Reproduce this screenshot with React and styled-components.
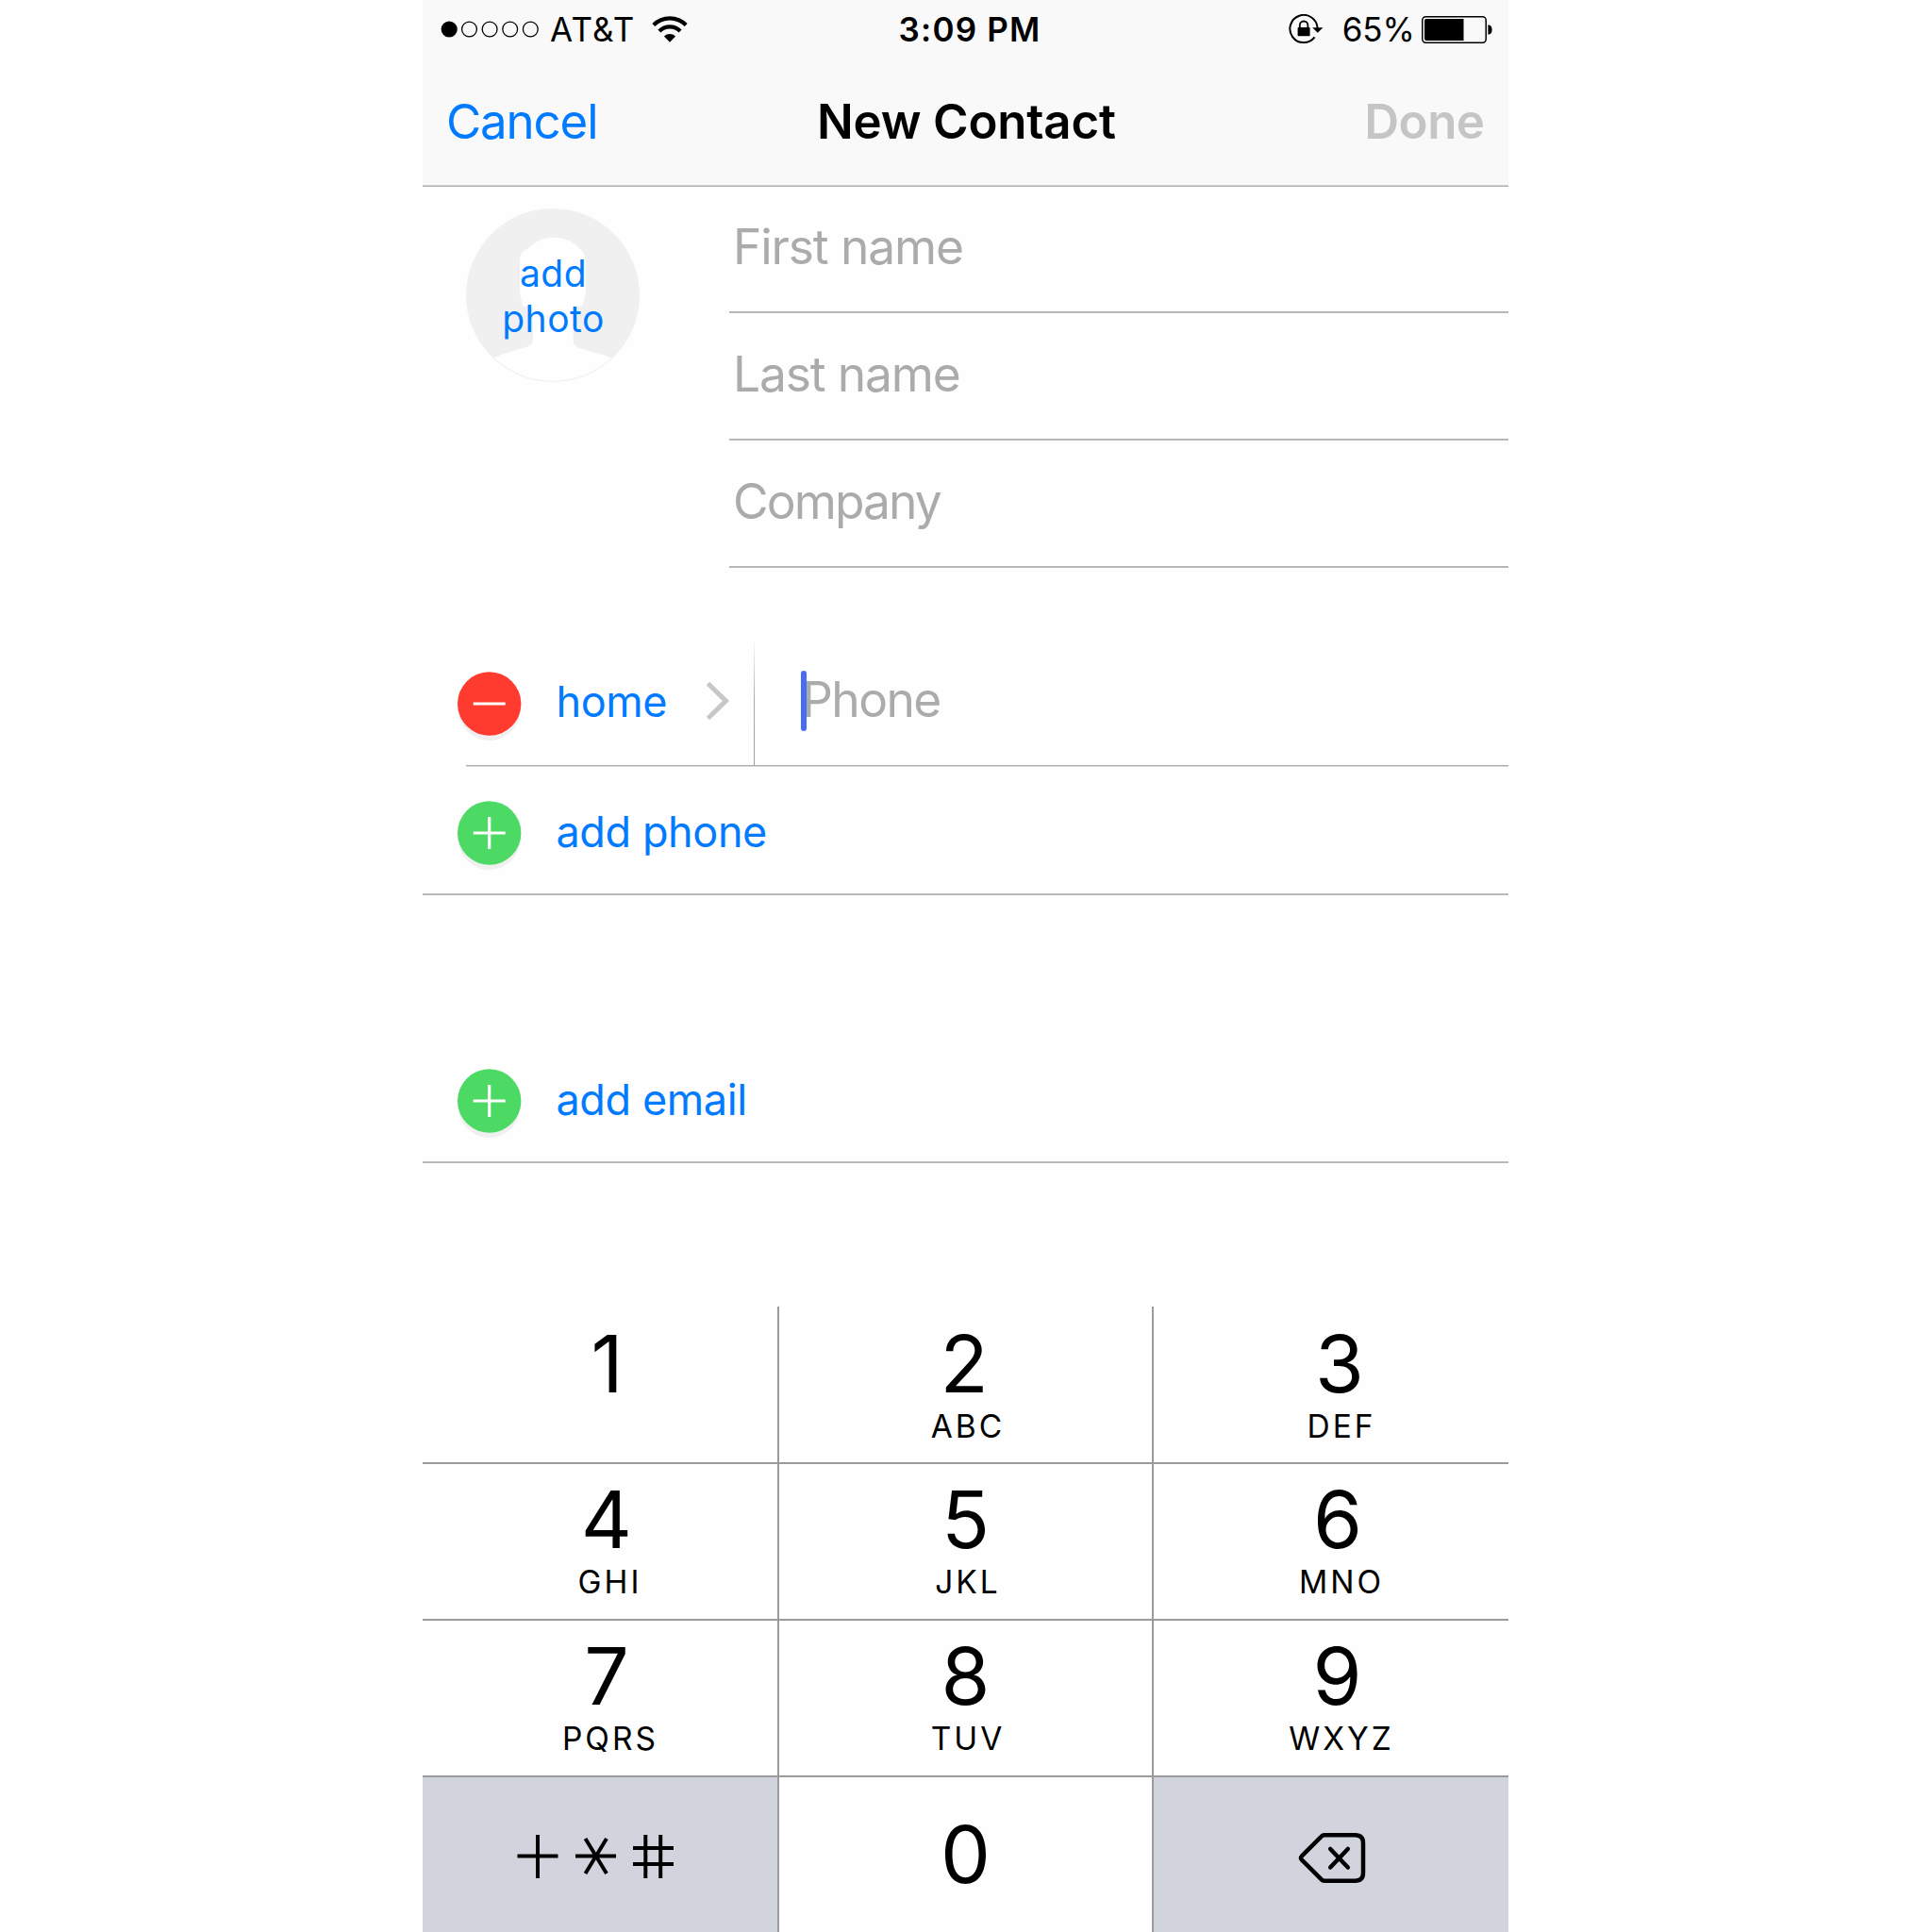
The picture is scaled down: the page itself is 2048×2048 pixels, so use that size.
import React from 'react';
import styled, { createGlobalStyle } from 'styled-components';

const GlobalStyle = createGlobalStyle`
  *, *::before, *::after { box-sizing: border-box; }
  body { margin: 0; background: #fefefe; overflow: hidden; }
`;

const BLUE = '#007aff';

const Phone = styled.main`
  width: 1151px;
  height: 2048px;
  margin-left: 448px;
  display: flex;
  flex-direction: column;
  background: #fefefe;
  color: #000;
  font-family: Inter, Roboto, 'Liberation Sans', sans-serif;
  white-space: nowrap;
`;

const Text = styled.span`
  font-size: ${(p) => p.$size}px;
  font-weight: ${(p) => p.$weight || 400};
  letter-spacing: ${(p) => p.$track || 0}px;
  margin-left: ${(p) => p.$indent || 0}px;
  margin-right: ${(p) => -(p.$track || 0)}px;
  color: ${(p) => p.$color || 'inherit'};
  line-height: 1.2;
`;

const Rule = styled.div`
  flex: none;
  height: 2px;
  margin-left: ${(p) => p.$inset || 0}px;
  background: linear-gradient(
    ${(p) => p.$top || '#bdbdbd'} 50%,
    ${(p) => p.$bottom || '#b5b5b5'} 50%
  );
`;

const Header = styled.header`
  background: #f9f9f9;
`;

const Bar = styled.div`
  display: grid;
  grid-template-columns: 1fr auto 1fr;
  align-items: center;
  height: ${(p) => p.$height}px;
  padding: ${(p) => p.$pad};
`;

const Side = styled.div`
  display: flex;
  align-items: center;
  justify-content: ${(p) => (p.$end ? 'flex-end' : 'flex-start')};
  gap: ${(p) => p.$gap || 0}px;
`;

const Icon = styled.svg`
  display: block;
  flex: none;
`;

const Identity = styled.section`
  display: grid;
  grid-template-columns: 325px 1fr;
`;

const PhotoCell = styled.div`
  padding: 23px 0 0 46px;
`;

const Photo = styled.button`
  position: relative;
  display: grid;
  place-items: center;
  width: 184px;
  height: 184px;
  padding: 0;
  border: 0;
  background: none;
  font-family: inherit;
`;

const PhotoLabel = styled.span`
  position: absolute;
  inset: 45px 0 auto 1px;
  font-size: 39px;
  line-height: 48px;
  letter-spacing: 0.5px;
  text-align: center;
  color: ${BLUE};
`;

const Field = styled.div`
  display: flex;
  align-items: center;
  height: ${(p) => p.$height}px;
  padding: 0 0 ${(p) => p.$lift}px 4px;
`;

const Row = styled.div`
  display: flex;
  align-items: center;
  height: 134px;
  margin-top: ${(p) => p.$gap || 0}px;
  padding-left: 37px;
`;

const Label = styled.div`
  display: flex;
  align-items: center;
  width: ${(p) => p.$width || 'auto'};
  margin-left: 36.5px;
  padding-top: ${(p) => p.$drop || 0}px;
`;

const RoundIcon = styled(Icon)`
  margin-top: ${(p) => p.$drop || 0}px;
`;

const Chevron = styled(Icon)`
  margin-bottom: 2px;
`;

const Divider = styled.div`
  width: 1px;
  height: 134px;
  margin-left: 24.5px;
  background: linear-gradient(to bottom, rgba(165, 165, 165, 0), #a8a8a8 50%, #a0a0a0);
`;

const PhoneInput = styled.div`
  display: flex;
  align-items: center;
  margin: 0 0 5px 49.5px;
`;

const Caret = styled.span`
  width: 6px;
  height: 64px;
  margin: 3px -5px 0 0;
  border-radius: 3px;
  background: #466df3;
  z-index: 1;
`;

const Keypad = styled.section`
  display: grid;
  grid-template-columns: 376px 395px 376px;
  grid-template-rows: 165px 164px 164px 164px;
  gap: 2px;
  margin-top: auto;
  background: #9b9b9b;
`;

const Key = styled.div`
  display: flex;
  flex-direction: column;
  align-items: center;
  justify-content: ${(p) => (p.$middle ? 'center' : 'flex-start')};
  padding-top: ${(p) => p.$top || 0}px;
  padding-left: ${(p) => p.$shift || 0}px;
  padding-right: ${(p) => p.$back || 0}px;
  background: ${(p) => (p.$dim ? '#d1d4dc' : '#fefefe')};
`;

const Digit = styled.span`
  font-size: 84px;
  line-height: 98px;
  padding-right: ${(p) => p.$nudge || 0}px;
`;

const Letters = styled.span`
  font-size: 33.5px;
  line-height: 34px;
  letter-spacing: 3px;
  margin-right: -4px;
`;

function SignalIcon() {
  return (
    <Icon width="104" height="20" viewBox="0 0 104 20">
      <circle cx="9.2" cy="10" r="8.6" />
      {[30.5, 52.1, 73.7, 95.3].map((x) => (
        <circle key={x} cx={x} cy="10" r="7.9" fill="none" stroke="#000" strokeWidth="1.3" />
      ))}
    </Icon>
  );
}

function WifiIcon() {
  return (
    <Icon width="38" height="28" viewBox="0 0 38 28">
      <g fill="none" stroke="#000" strokeWidth="4.2">
        <path d="M1.8 9.6A24.3 24.3 0 0 1 36.2 9.6" />
        <path d="M7.9 16A15.8 15.8 0 0 1 30.1 16" />
      </g>
      <path d="M12.9 21.6A8.7 8.7 0 0 1 25.1 21.6L19 27.8Z" />
    </Icon>
  );
}

function RotationLockIcon() {
  return (
    <Icon width="37" height="32" viewBox="0 0 37 32">
      <path
        d="M27.6 24.4A14.6 14.6 0 1 1 30.6 15"
        fill="none"
        stroke="#000"
        strokeWidth="2"
      />
      <path d="M25.2 14.2H36.4L30.8 19.8Z" />
      <rect x="9.6" y="14" width="13" height="9.3" rx="0.8" />
      <path
        d="M11.8 15V11.8A4.3 4.3 0 0 1 20.4 11.8V15"
        fill="none"
        stroke="#000"
        strokeWidth="1.8"
      />
    </Icon>
  );
}

function BatteryIcon() {
  return (
    <Icon width="75" height="29" viewBox="0 0 75 29">
      <rect x="0.8" y="0.8" width="67.4" height="27.4" rx="3.6" fill="none" stroke="#000" strokeWidth="1.5" />
      <path d="M5 3H44.5V26H5Q3 26 3 24V5Q3 3 5 3Z" />
      <path d="M70.4 9.3Q74.6 9.8 74.6 14.5T70.4 19.7Z" />
    </Icon>
  );
}

function Silhouette() {
  return (
    <Icon width="184" height="184" viewBox="0 0 184 184">
      <defs>
        <clipPath id="photo-disc">
          <circle cx="92" cy="92" r="90.8" />
        </clipPath>
      </defs>
      <circle cx="92" cy="92" r="92" fill="#f0f0f0" />
      <path
        clipPath="url(#photo-disc)"
        fill="#fefefe"
        d="M92.5 30.7C102 30.5 113 34 119.5 42C124.5 44.5 126.5 50 126.5 56L127 86C127 92 125 98 123.3 103.5L113.5 105V137C113.5 142.5 114.5 146 119 147.5C130 151.5 143 154 154 158.3V184H30V158.3C41 153 54 150 65 146.5C70 145 71 142 71 137V105L60.5 103.5C58.5 98 57 92 57 86V55C57 49 60 44 66.5 42C73 35 82 30.7 92.5 30.7Z"
      />
    </Icon>
  );
}

function RoundButton({ kind, drop }) {
  return (
    <RoundIcon $drop={drop} width="68" height="76" viewBox="0 -2 68 76">
      <circle cx="33.7" cy="40" r="33" fill="#f0f0f0" />
      <circle cx="33.7" cy="34" r="33.7" fill={kind === 'add' ? '#4cd964' : '#ff3b30'} />
      <path
        d={kind === 'add' ? 'M16.7 34H50.7M33.7 17V51' : 'M16.7 34H50.7'}
        stroke="#fff"
        strokeWidth="3.2"
      />
    </RoundIcon>
  );
}

function ChevronIcon() {
  return (
    <Chevron width="26" height="42" viewBox="0 0 26 42">
      <path d="M2.5 2.5L21.5 21L2.5 39.5" fill="none" stroke="#c7c7c7" strokeWidth="5" />
    </Chevron>
  );
}

function SymbolsIcon() {
  return (
    <Icon width="168" height="46" viewBox="0 0 168 46">
      <g fill="none" stroke="#000" strokeWidth="4">
        <path d="M0.5 22.5H43.500M22 -2.500V48" />
        <path d="M62 22.500H105M72.500 4L95 41M95 4L72.500 41" />
        <path d="M123 14H166M123 31H166M136.300 -2V48M152.200 -2V48" />
      </g>
    </Icon>
  );
}

function BackspaceIcon() {
  return (
    <Icon width="72" height="54" viewBox="0 0 72 54">
      <g fill="none" stroke="#000" strokeWidth="4.5" strokeLinecap="round" strokeLinejoin="round">
        <path d="M28 2.300H60.500Q69 2.300 69 10.800V42.200Q69 50.700 60.500 50.700H28Q26 50.700 24.600 49.200L3.800 28.300Q2.200 26.500 3.800 24.700L24.600 3.800Q26 2.300 28 2.300Z" />
        <path d="M34.200 17L52.800 36.500M52.800 17L34.200 36.500" />
      </g>
    </Icon>
  );
}

const FIELDS = [
  { name: 'First name', height: 132, lift: 5, track: -1.15 },
  { name: 'Last name', height: 133, lift: 3, track: -1.15 },
  { name: 'Company', height: 133, lift: 3, track: -1.9 },
];

const KEYS = [
  { digit: '1', letters: '', shift: 15, top: 12 },
  { digit: '2', letters: 'ABC', shift: 1, top: 12, nudge: 4 },
  { digit: '3', letters: 'DEF', shift: 18, top: 12 },
  { digit: '4', letters: 'GHI', shift: 17, top: 10, nudge: 3 },
  { digit: '5', letters: 'JKL', shift: 1, top: 10, nudge: 1 },
  { digit: '6', letters: 'MNO', shift: 18, top: 10, nudge: 4 },
  { digit: '7', letters: 'PQRS', shift: 18, top: 10, nudge: 4 },
  { digit: '8', letters: 'TUV', shift: 1, top: 10, nudge: 1 },
  { digit: '9', letters: 'WXYZ', shift: 18, top: 10, nudge: 5 },
];

export default function App() {
  return (
    <>
      <GlobalStyle />
      <Phone>
        <Header>
          <Bar $height={62} $pad="0 17px 0 19px">
            <Side>
              <SignalIcon />
              <Side $gap={19}>
                <Text $size={35} $track={1.2} $indent={1}>&nbsp;AT&amp;T</Text>
                <WifiIcon />
              </Side>
            </Side>
            <Side>
              <Text $size={35} $weight={600} $track={1.2} $indent={6}>3:09 PM</Text>
            </Side>
            <Side $end $gap={7}>
              <Side $gap={20}>
                <RotationLockIcon />
                <Text $size={35}>65%</Text>
              </Side>
              <BatteryIcon />
            </Side>
          </Bar>
          <Bar $height={134} $pad="0 25px">
            <Side>
              <Text $size={51} $color={BLUE} $track={-1.15}>Cancel</Text>
            </Side>
            <Text $size={51} $weight={600} $track={-0.2} $indent={2}>New Contact</Text>
            <Side $end>
              <Text $size={51} $weight={600} $track={-0.5} $color="#c5c5c5">Done</Text>
            </Side>
          </Bar>
        </Header>
        <Rule $top="#d0d0d0" $bottom="#b0b0b0" />

        <Identity>
          <PhotoCell>
            <Photo type="button">
              <Silhouette />
              <PhotoLabel>add<br />photo</PhotoLabel>
            </Photo>
          </PhotoCell>
          <div>
            {FIELDS.map((f) => (
              <React.Fragment key={f.name}>
                <Field $height={f.height} $lift={f.lift}>
                  <Text $size={51.5} $track={f.track} $color="#ababab">{f.name}</Text>
                </Field>
                <Rule $top="#b4b4b4" $bottom="#bababa" />
              </React.Fragment>
            ))}
          </div>
        </Identity>

        <Row $gap={75}>
          <RoundButton kind="remove" drop={8} />
          <Label $width="158.5px">
            <Text $size={45} $color={BLUE} $track={-0.4}>home</Text>
          </Label>
          <ChevronIcon />
          <Divider />
          <PhoneInput>
            <Caret />
            <Text $size={51.5} $track={-1.6} $color="#ababab">Phone</Text>
          </PhoneInput>
        </Row>
        <Rule $inset={46} $top="#aaaaaa" $bottom="#dcdcdc" />
        <Row>
          <RoundButton kind="add" drop={10} />
          <Label $drop={3}>
            <Text $size={45} $color={BLUE} $track={-0.4}>add phone</Text>
          </Label>
        </Row>
        <Rule />
        <Row $gap={148}>
          <RoundButton kind="add" drop={10} />
          <Label $drop={3}>
            <Text $size={45} $color={BLUE} $track={-0.4}>add email</Text>
          </Label>
        </Row>
        <Rule />

        <Keypad>
          {KEYS.map((k) => (
            <Key key={k.digit} $shift={k.shift} $top={k.top}>
              <Digit $nudge={k.nudge}>{k.digit}</Digit>
              {k.letters && <Letters>{k.letters}</Letters>}
            </Key>
          ))}
          <Key $middle $dim $top={4} $back={8}>
            <SymbolsIcon />
          </Key>
          <Key $middle>
            <Digit>0</Digit>
          </Key>
          <Key $middle $dim $top={7} $shift={2}>
            <BackspaceIcon />
          </Key>
        </Keypad>
      </Phone>
    </>
  );
}
